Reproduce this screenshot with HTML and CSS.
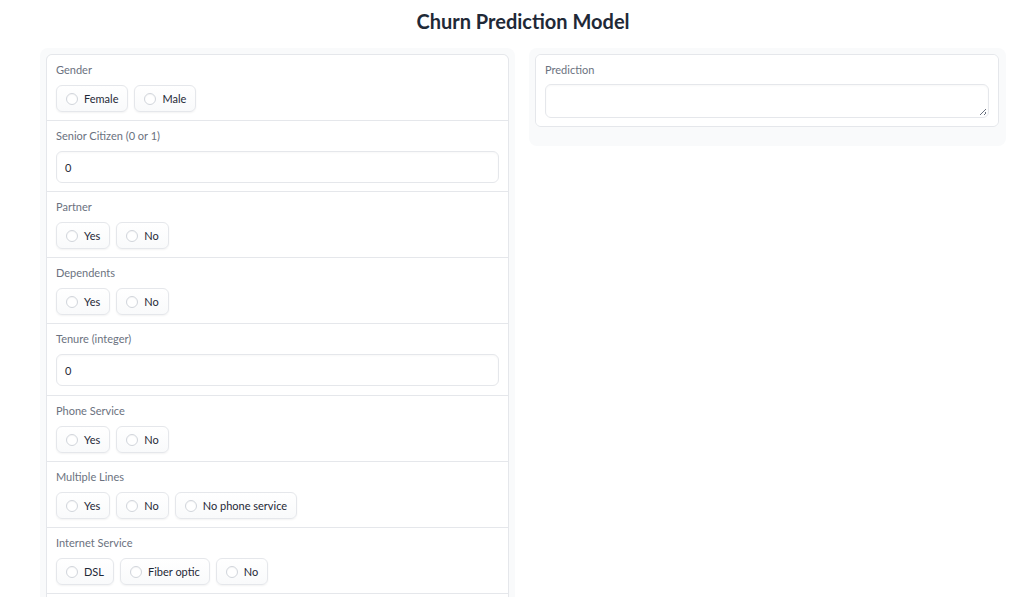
FILE: index.html
```html
<!DOCTYPE html>
<html lang="en">
<head>
<meta charset="utf-8">
<title>Churn Prediction Model</title>
<link rel="stylesheet" href="styles.css">
</head>
<body>
<div class="app">
  <h1 class="title">Churn Prediction Model</h1>
  <div class="row">
    <div class="panel panel-left">
      <div class="form">
        <div class="block">
          <span class="label">Gender</span>
          <div class="radios">
            <label class="radio"><span class="dot"></span><span>Female</span></label>
            <label class="radio"><span class="dot"></span><span>Male</span></label>
          </div>
        </div>
        <div class="block">
          <span class="label">Senior Citizen (0 or 1)</span>
          <div class="input">0</div>
        </div>
        <div class="block">
          <span class="label">Partner</span>
          <div class="radios">
            <label class="radio"><span class="dot"></span><span>Yes</span></label>
            <label class="radio"><span class="dot"></span><span>No</span></label>
          </div>
        </div>
        <div class="block">
          <span class="label">Dependents</span>
          <div class="radios">
            <label class="radio"><span class="dot"></span><span>Yes</span></label>
            <label class="radio"><span class="dot"></span><span>No</span></label>
          </div>
        </div>
        <div class="block block-tall">
          <span class="label">Tenure (integer)</span>
          <div class="input">0</div>
        </div>
        <div class="block">
          <span class="label">Phone Service</span>
          <div class="radios">
            <label class="radio"><span class="dot"></span><span>Yes</span></label>
            <label class="radio"><span class="dot"></span><span>No</span></label>
          </div>
        </div>
        <div class="block">
          <span class="label">Multiple Lines</span>
          <div class="radios">
            <label class="radio"><span class="dot"></span><span>Yes</span></label>
            <label class="radio"><span class="dot"></span><span>No</span></label>
            <label class="radio"><span class="dot"></span><span>No phone service</span></label>
          </div>
        </div>
        <div class="block">
          <span class="label">Internet Service</span>
          <div class="radios">
            <label class="radio"><span class="dot"></span><span>DSL</span></label>
            <label class="radio"><span class="dot"></span><span>Fiber optic</span></label>
            <label class="radio"><span class="dot"></span><span>No</span></label>
          </div>
        </div>
        <div class="block">
          <span class="label">Online Security</span>
          <div class="radios">
            <label class="radio"><span class="dot"></span><span>Yes</span></label>
            <label class="radio"><span class="dot"></span><span>No</span></label>
            <label class="radio"><span class="dot"></span><span>No internet service</span></label>
          </div>
        </div>
      </div>
    </div>
    <div class="panel panel-right">
      <div class="form">
        <div class="block">
          <span class="label">Prediction</span>
          <div class="textarea"></div>
        </div>
      </div>
    </div>
  </div>
</div>
</body>
</html>
```

FILE: styles.css
```css
html, body {
  margin: 0;
  padding: 0;
  background: #ffffff;
  font-family: Lato, "Liberation Sans", sans-serif;
  color: #1f2937;
  overflow: hidden;
}

.app {
  width: 966px;
  margin-left: 40px;
}

.title {
  margin: 0;
  padding-top: 9px;
  height: 48px;
  box-sizing: border-box;
  text-align: center;
  font-size: 20px;
  font-weight: 700;
  line-height: 24px;
  color: #1f2937;
}

.row {
  display: flex;
  gap: 14px;
  align-items: flex-start;
}

.panel {
  background: #f9fafb;
  border-radius: 8px;
  padding: 6px;
  box-sizing: border-box;
}

.panel-left {
  width: 475px;
  flex: none;
}

.panel-right {
  flex: 1;
  padding: 6px 7px 19px 6px;
}

.form {
  display: flex;
  flex-direction: column;
  gap: 1px;
  background: #e5e7eb;
  border: 1px solid #e5e7eb;
  border-radius: 6px;
  overflow: hidden;
}

.block {
  background: #ffffff;
  padding: 7px 9px 8px;
  display: flex;
  flex-direction: column;
  gap: 7px;
}

.block-tall {
  padding-bottom: 9px;
}

.label {
  font-size: 11px;
  line-height: 16px;
  color: #6b7280;
}

.radios {
  display: flex;
  gap: 6px;
  flex-wrap: wrap;
}

.radio {
  display: flex;
  align-items: center;
  gap: 6px;
  height: 27px;
  box-sizing: border-box;
  padding: 0 9px;
  border: 1px solid #e5e7eb;
  border-radius: 6px;
  background: linear-gradient(to top, #f9fafb, #ffffff);
  box-shadow: 0 1px 2px rgba(0, 0, 0, 0.05);
  font-size: 11px;
  color: #1f2937;
}

.dot {
  width: 12px;
  height: 12px;
  box-sizing: border-box;
  border: 1px solid #d1d5db;
  border-radius: 50%;
  background: #ffffff;
  box-shadow: inset 0 1px 1px rgba(0, 0, 0, 0.04);
}

.input {
  height: 32px;
  box-sizing: border-box;
  border: 1px solid #e5e7eb;
  border-radius: 6px;
  background: #ffffff;
  box-shadow: inset 0 1px 2px rgba(0, 0, 0, 0.03);
  padding: 0 8px;
  display: flex;
  align-items: center;
  font-size: 11px;
  color: #1f2937;
}

.textarea {
  position: relative;
  height: 34px;
  box-sizing: border-box;
  border: 1px solid #e5e7eb;
  border-radius: 6px;
  background: #ffffff;
  box-shadow: inset 0 1px 2px rgba(0, 0, 0, 0.03);
  margin-top: -1px;
}

.textarea::after {
  content: "";
  position: absolute;
  right: 2px;
  bottom: 2px;
  width: 6px;
  height: 6px;
  background:
    linear-gradient(135deg, transparent 45%, #6b7280 45%, #6b7280 55%, transparent 55%) no-repeat,
    linear-gradient(135deg, transparent 75%, #6b7280 75%, #6b7280 88%, transparent 88%) no-repeat;
}
```
